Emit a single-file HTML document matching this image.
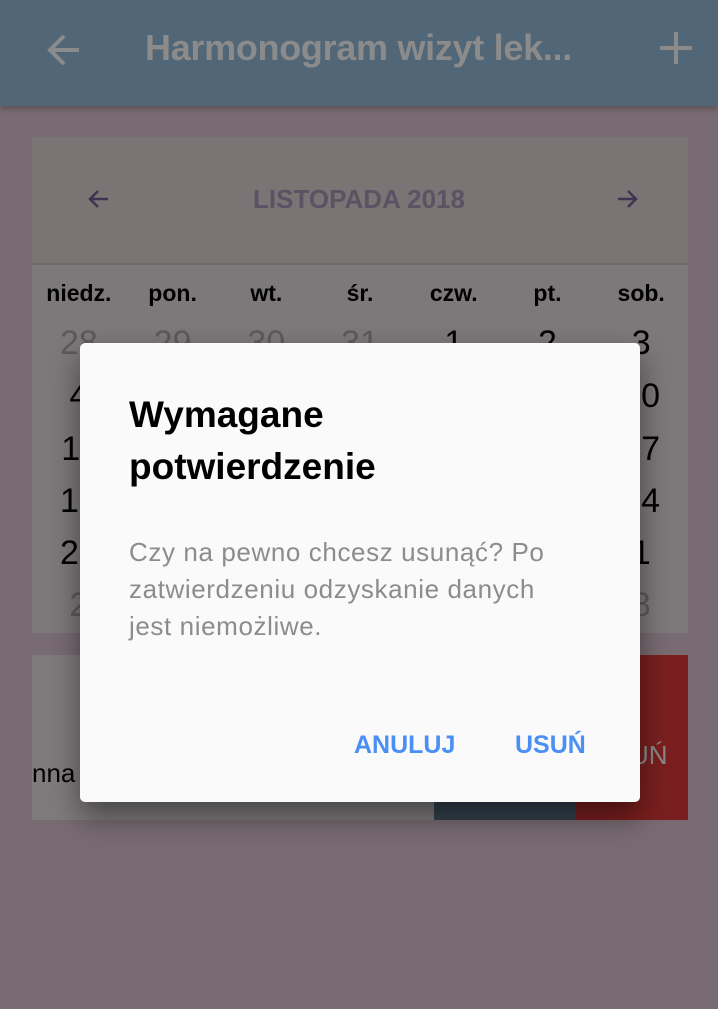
<!DOCTYPE html>
<html><head><meta charset="utf-8"><style>
*{margin:0;padding:0;box-sizing:border-box}
body{width:718px;height:1009px;background:#786b72;position:relative;overflow:hidden;font-family:"Liberation Sans",sans-serif}
.abs{position:absolute}
.bar{left:0;top:0;width:718px;height:106px;background:#516677;box-shadow:0 3px 6px rgba(0,0,0,.25)}
.title{left:145px;top:27px;font-size:36px;color:#8b8b8b;font-weight:bold;letter-spacing:-0.3px;white-space:nowrap}
.cal{left:32px;top:137px;width:656px;height:496px;background:#7d797a}
.calhead{left:32px;top:137px;width:656px;height:128px;background:#7b7475;border-bottom:2px solid #6f6a6c}
.mon{left:0;width:718px;top:184px;text-align:center;font-size:26px;color:#5b5363;font-weight:bold}
.row{left:32px;width:656px;display:flex}
.row div{flex:1;text-align:center}
.hd{top:280px;font-size:23px;font-weight:bold;color:#000}
.num{font-size:34px;color:#000}
.g{color:#5c5a5b}
.card{left:32px;top:655px;width:402px;height:165px;background:#7f7b7d}
.slate{left:434px;top:655px;width:142px;height:165px;background:#33414c}
.red{left:576px;top:655px;width:112px;height:165px;background:#7a1f1f}
.dlg{left:80px;top:343px;width:560px;height:459px;background:#fafafa;border-radius:5px;box-shadow:0 14px 30px rgba(0,0,0,.45)}
.dt{left:49px;top:46px;font-size:37px;line-height:52px;color:#000;font-weight:bold}
.db{left:49px;top:191px;font-size:26px;line-height:37px;color:#8c8c8c;width:460px;letter-spacing:0.6px}
.btn{top:388px;font-size:25px;color:#4a8ff5;font-weight:bold}
</style></head><body>
<div class="abs bar"></div>
<svg class="abs" style="left:44px;top:30px" width="40" height="40" viewBox="0 0 40 40"><path d="M35 20H7M20 6L6 20l14 14" stroke="#8b8b8b" stroke-width="4" fill="none"/></svg>
<div class="abs title">Harmonogram wizyt lek...</div>
<svg class="abs" style="left:656px;top:28px" width="40" height="40" viewBox="0 0 40 40"><path d="M20 4v32M4 20h32" stroke="#8b8b8b" stroke-width="4"/></svg>
<div class="abs cal"></div>
<div class="abs calhead"></div>
<svg class="abs" style="left:86px;top:186px" width="26" height="26" viewBox="0 0 26 26"><path d="M22 13H4M12 5l-8 8 8 8" stroke="#3d3550" stroke-width="2.5" fill="none"/></svg>
<svg class="abs" style="left:614px;top:186px" width="26" height="26" viewBox="0 0 26 26"><path d="M4 13h18M14 5l8 8-8 8" stroke="#3d3550" stroke-width="2.5" fill="none"/></svg>
<div class="abs mon">LISTOPADA 2018</div>
<div class="abs row hd"><div>niedz.</div><div>pon.</div><div>wt.</div><div>śr.</div><div>czw.</div><div>pt.</div><div>sob.</div></div>
<div class="abs row num" style="top:324px"><div class="g">28</div><div class="g">29</div><div class="g">30</div><div class="g">31</div><div>1</div><div>2</div><div>3</div></div>
<div class="abs row num" style="top:377px"><div>4</div><div>5</div><div>6</div><div>7</div><div>8</div><div>9</div><div>10</div></div>
<div class="abs row num" style="top:430px"><div>11</div><div>12</div><div>13</div><div>14</div><div>15</div><div>16</div><div>17</div></div>
<div class="abs row num" style="top:482px"><div>18</div><div>19</div><div>20</div><div>21</div><div>22</div><div>23</div><div>24</div></div>
<div class="abs row num" style="top:534px"><div>25</div><div>26</div><div>27</div><div>28</div><div>29</div><div>30</div><div>1</div></div>
<div class="abs row num g" style="top:586px"><div>2</div><div>3</div><div>4</div><div>5</div><div>6</div><div>7</div><div>8</div></div>
<div class="abs card"></div>
<div class="abs slate"></div>
<div class="abs red"></div>
<div class="abs" style="left:32px;top:758px;font-size:26px;color:#000">nna</div>
<div class="abs" style="left:630px;top:740px;font-size:26px;color:#8a8a8a">UŃ</div>
<div class="abs dlg">
<div class="abs dt">Wymagane<br>potwierdzenie</div>
<div class="abs db">Czy na pewno chcesz usunąć? Po<br>zatwierdzeniu odzyskanie danych<br>jest niemożliwe.</div>
<div class="abs btn" style="left:274px">ANULUJ</div>
<div class="abs btn" style="left:435px">USUŃ</div>
</div>
</body></html>
